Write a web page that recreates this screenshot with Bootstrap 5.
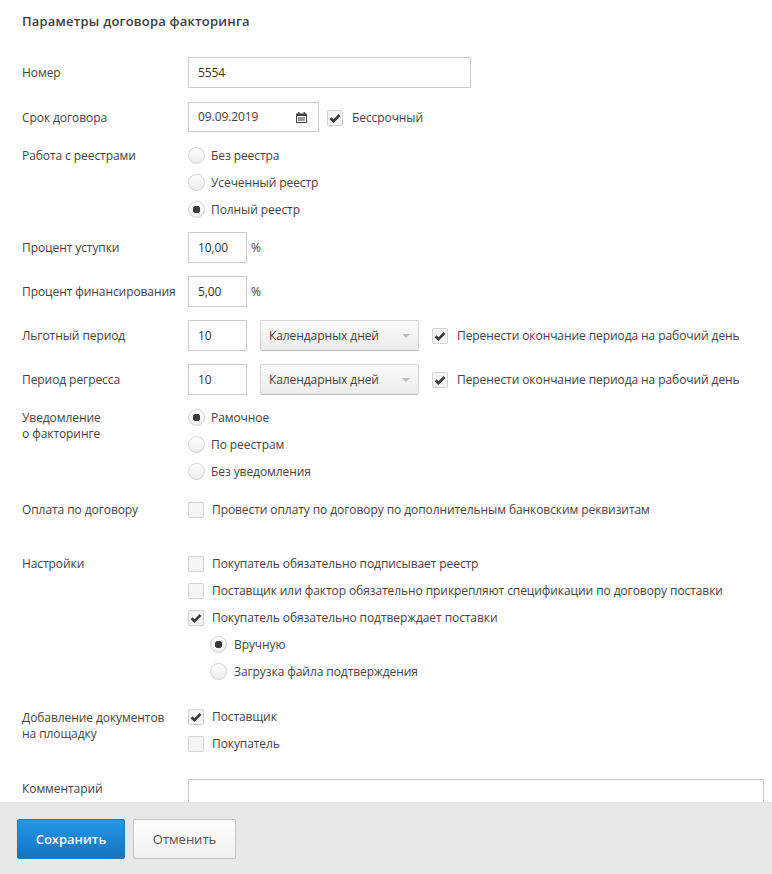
<!DOCTYPE html>
<html lang="ru">
<head>
  <meta charset="UTF-8" />
  <meta name="viewport" content="width=device-width, initial-scale=1" />
  <title>Параметры договора факторинга</title>
  <link href="https://cdn.jsdelivr.net/npm/bootstrap@5.3.0/dist/css/bootstrap.min.css" rel="stylesheet" />
  <style>
    html, body { height: 100%; }
    body {
      font-family: "Open Sans", "Liberation Sans", sans-serif;
      font-size: 12px;
      line-height: 16px;
      letter-spacing: -0.08px;
      color: #444;
      background: #fff;
      overflow: hidden;
    }
    .page-shell { height: 874px; }
    .form-area { flex: 1 1 auto; min-height: 0; overflow: hidden; padding: 13px 8px 0 22px; }
    .page-title { font-size: 13px; font-weight: 600; line-height: 16px; letter-spacing: 0.2px; color: #3c3c3c; margin: 0 0 28px; }
    .field-row { display: flex; margin-bottom: 14px; }
    .field-label { flex: 0 0 166px; color: #444; }
    .field-label.for-input { padding-top: 8px; }
    .field-label.for-radio { padding-top: 1px; }
    .field-label.for-area { padding-top: 2px; }
    .field-value { flex: 1 1 auto; min-width: 0; }
    .text-field.form-control {
      height: 31px; border: 1px solid #ccc; border-radius: 0; padding: 0 9px;
      font-size: 12px; line-height: 16px; letter-spacing: -0.08px; color: #333; box-shadow: none;
    }
    .w-number { width: 283px; }
    .w-short { width: 59px; }
    .date-field { position: relative; width: 131px; }
    .date-field .form-control { width: 100%; height: 30px; padding-bottom: 2px; color: #444; }
    .date-field svg { position: absolute; right: 12px; top: 10px; }
    .unit { margin-left: 4px; }
    .period-select {
      display: flex; align-items: center; justify-content: space-between;
      width: 159px; height: 31px; margin-left: 13px; padding: 0 9px 0 8px;
      font-size: 12px; color: #444; border: 1px solid #d6d6d6; border-bottom-color: #bbb;
      border-radius: 2px; background: linear-gradient(#fbfbfb, #ececec);
    }
    .select-arrow { width: 0; height: 0; margin-right: -1px; border-left: 4px solid transparent; border-right: 4px solid transparent; border-top: 4px solid #bbb; }
    .choice { display: flex; align-items: center; min-height: 16px; margin: 0; padding: 0; }
    .choice .form-check-input { flex: none; float: none; margin: 0; width: 16px; height: 16px; border: 1px solid #d2d2d2; box-shadow: none; }
    .choice .form-check-input[type=checkbox] {
      border-radius: 2px; background-color: #f4f4f4; background-size: 12px 12px; background-position: center;
    }
    .choice .form-check-input[type=radio] {
      background-image: none; background-color: #f5f5f5; background: linear-gradient(#fff, #ececec);
      border-radius: 50%;
    }
    .choice .form-check-input:checked[type=checkbox] {
      border-color: #d2d2d2;
      background-image: url("data:image/svg+xml,%3Csvg xmlns='http://www.w3.org/2000/svg' viewBox='0 0 12 12'%3E%3Cpath d='M1.5 6.200 4.500 9.200 10.500 3' fill='none' stroke='%233c3c3c' stroke-width='2.700'/%3E%3C/svg%3E");
    }
    .choice .form-check-input:checked[type=radio] {
      border-color: #d2d2d2;
      background: radial-gradient(circle at center, #3a3a3a 0 3.5px, transparent 4px), linear-gradient(#fff, #ececec);
    }
    .choice label { margin-left: 8px; color: #444; }
    .choice.radio-choice label { margin-left: 6px; }
    .choice.radio-choice .form-check-input { width: 17px; height: 17px; }
    .stack { display: flex; flex-direction: column; gap: 11px; }
    .stack.radios { gap: 10px; }
    .sub-options { padding-left: 22px; margin-top: -1px; }
    .sub-options .choice.radio-choice label { margin-left: 7px; }
    .comment-box.form-control { width: 576px; height: 60px; border: 1px solid #ccc; border-radius: 0; box-shadow: none; resize: none; }
    .footer-bar { flex: 0 0 72px; background: #e8e8e8; display: flex; gap: 8px; padding: 17px 17px 0; }
    .footer-bar .btn { height: 40px; border-radius: 2px; font-size: 13px; line-height: 16px; padding: 0; }
    .btn-save { width: 108px; font-weight: 600; color: #fff; border: 1px solid #1a78c0; background: linear-gradient(#2397e8, #1673bd); }
    .btn-cancel { width: 103px; color: #555; border: 1px solid #c4c4c4; background: linear-gradient(#fff, #f0f0f0); }
    .row-tight { margin-bottom: 13px; }
    .row-date { margin-bottom: 15px; }
    .row-pay { margin-bottom: 38px; }
    .row-notify { margin-bottom: 22px; }
    .row-settings { margin-bottom: 29px; }
    .row-docs { margin-bottom: 27px; }
    .date-check { margin-left: 8px; margin-top: 1px; }
    .date-check label { margin-left: 9px; }
    .move-check { margin-left: 13px; }
    .move-check label { margin-left: 9px; }
  </style>
</head>
<body>
  <div class="page-shell d-flex flex-column">
    <div class="form-area">
      <h1 class="page-title">Параметры договора факторинга</h1>

      <div class="field-row">
        <div class="field-label for-input">Номер</div>
        <div class="field-value"><input class="form-control text-field w-number" value="5554" /></div>
      </div>

      <div class="field-row row-date">
        <div class="field-label for-input">Срок договора</div>
        <div class="field-value d-flex align-items-center">
          <div class="date-field">
            <input class="form-control text-field" value="09.09.2019" />
            <svg width="11" height="11" viewBox="0 0 11 11"><path fill="#444" d="M0 1.500h2V0h1.500v1.500h4V0H9v1.500h2V11H0zM1 4v6h9V4z"/><path fill="#444" d="M2 5h7v4H2z" opacity=".55"/></svg>
          </div>
          <div class="choice date-check">
            <input class="form-check-input" type="checkbox" id="noEnd" checked />
            <label for="noEnd">Бессрочный</label>
          </div>
        </div>
      </div>

      <div class="field-row">
        <div class="field-label for-radio">Работа с реестрами</div>
        <div class="field-value stack radios">
          <div class="choice radio-choice"><input class="form-check-input" type="radio" name="reg" id="r1" /><label for="r1">Без реестра</label></div>
          <div class="choice radio-choice"><input class="form-check-input" type="radio" name="reg" id="r2" /><label for="r2">Усеченный реестр</label></div>
          <div class="choice radio-choice"><input class="form-check-input" type="radio" name="reg" id="r3" checked /><label for="r3">Полный реестр</label></div>
        </div>
      </div>

      <div class="field-row row-tight">
        <div class="field-label for-input">Процент уступки</div>
        <div class="field-value d-flex align-items-center"><input class="form-control text-field w-short" value="10,00" /><span class="unit">%</span></div>
      </div>

      <div class="field-row row-tight">
        <div class="field-label for-input">Процент финансирования</div>
        <div class="field-value d-flex align-items-center"><input class="form-control text-field w-short" value="5,00" /><span class="unit">%</span></div>
      </div>

      <div class="field-row row-tight">
        <div class="field-label for-input">Льготный период</div>
        <div class="field-value d-flex align-items-center">
          <input class="form-control text-field w-short" value="10" />
          <div class="period-select"><span>Календарных дней</span><span class="select-arrow"></span></div>
          <div class="choice move-check"><input class="form-check-input" type="checkbox" id="c1" checked /><label for="c1">Перенести окончание периода на рабочий день</label></div>
        </div>
      </div>

      <div class="field-row">
        <div class="field-label for-input">Период регресса</div>
        <div class="field-value d-flex align-items-center">
          <input class="form-control text-field w-short" value="10" />
          <div class="period-select"><span>Календарных дней</span><span class="select-arrow"></span></div>
          <div class="choice move-check"><input class="form-check-input" type="checkbox" id="c2" checked /><label for="c2">Перенести окончание периода на рабочий день</label></div>
        </div>
      </div>

      <div class="field-row row-notify">
        <div class="field-label for-radio">Уведомление<br />о факторинге</div>
        <div class="field-value stack radios">
          <div class="choice radio-choice"><input class="form-check-input" type="radio" name="note" id="n1" checked /><label for="n1">Рамочное</label></div>
          <div class="choice radio-choice"><input class="form-check-input" type="radio" name="note" id="n2" /><label for="n2">По реестрам</label></div>
          <div class="choice radio-choice"><input class="form-check-input" type="radio" name="note" id="n3" /><label for="n3">Без уведомления</label></div>
        </div>
      </div>

      <div class="field-row row-pay">
        <div class="field-label">Оплата по договору</div>
        <div class="field-value">
          <div class="choice"><input class="form-check-input" type="checkbox" id="p1" /><label for="p1">Провести оплату по договору по дополнительным банковским реквизитам</label></div>
        </div>
      </div>

      <div class="field-row row-settings">
        <div class="field-label">Настройки</div>
        <div class="field-value stack">
          <div class="choice"><input class="form-check-input" type="checkbox" id="s1" /><label for="s1">Покупатель обязательно подписывает реестр</label></div>
          <div class="choice"><input class="form-check-input" type="checkbox" id="s2" /><label for="s2">Поставщик или фактор обязательно прикрепляют спецификации по договору поставки</label></div>
          <div class="choice"><input class="form-check-input" type="checkbox" id="s3" checked /><label for="s3">Покупатель обязательно подтверждает поставки</label></div>
          <div class="stack radios sub-options">
            <div class="choice radio-choice"><input class="form-check-input" type="radio" name="conf" id="v1" checked /><label for="v1">Вручную</label></div>
            <div class="choice radio-choice"><input class="form-check-input" type="radio" name="conf" id="v2" /><label for="v2">Загрузка файла подтверждения</label></div>
          </div>
        </div>
      </div>

      <div class="field-row row-docs">
        <div class="field-label for-radio">Добавление документов<br />на площадку</div>
        <div class="field-value stack">
          <div class="choice"><input class="form-check-input" type="checkbox" id="d1" checked /><label for="d1">Поставщик</label></div>
          <div class="choice"><input class="form-check-input" type="checkbox" id="d2" /><label for="d2">Покупатель</label></div>
        </div>
      </div>

      <div class="field-row mb-0">
        <div class="field-label for-area">Комментарий</div>
        <div class="field-value"><textarea class="form-control comment-box"></textarea></div>
      </div>
    </div>

    <div class="footer-bar">
      <button type="button" class="btn btn-save">Сохранить</button>
      <button type="button" class="btn btn-cancel">Отменить</button>
    </div>
  </div>
  <script src="https://cdn.jsdelivr.net/npm/bootstrap@5.3.0/dist/js/bootstrap.bundle.min.js"></script>
</body>
</html>
